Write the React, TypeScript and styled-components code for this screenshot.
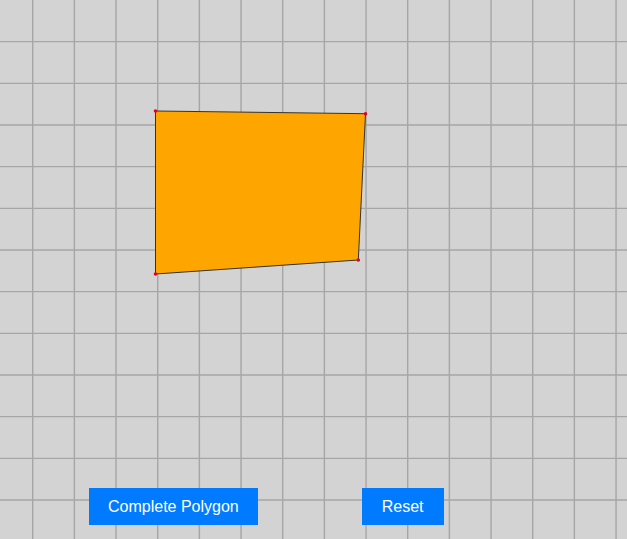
import React from "react";
import styled, { createGlobalStyle } from "styled-components";

const GlobalStyle = createGlobalStyle`
  html, body {
    margin: 0;
    padding: 0;
    background: #d3d3d3;
  }
  body {
    font-family: "Liberation Sans", Arial, sans-serif;
  }
`;

const Stage = styled.div`
  position: relative;
  width: 627px;
  height: 539px;
  overflow: hidden;
  background: #d3d3d3;
`;

const Canvas = styled.svg`
  position: absolute;
  inset: 0;
  display: block;
`;

const Toolbar = styled.div`
  position: relative;
  z-index: 1;
  display: flex;
  align-items: flex-start;
  gap: 104px;
  padding: 488px 0 0 89px;
`;

const Button = styled.button<{ $padX?: number }>`
  height: 37px;
  padding: 0 ${(p) => p.$padX ?? 19}px;
  border: none;
  border-radius: 0;
  background: #007bff;
  color: #ffffff;
  font-family: "Liberation Sans", Arial, sans-serif;
  font-size: 16px;
  line-height: 37px;
  cursor: pointer;
`;

const STEP = 41.667;
const X0 = 32.7;

const points: [number, number][] = [
  [155.5, 111],
  [365.5, 113.7],
  [358.3, 260],
  [155.5, 274],
];

export default function App() {
  const vLines: number[] = [];
  for (let x = X0; x < 627; x += STEP) vLines.push(x);
  const hLines: number[] = [];
  for (let y = STEP; y < 539; y += STEP) hLines.push(y);

  return (
    <>
      <GlobalStyle />
      <Stage>
        <Canvas width={627} height={539} viewBox="0 0 627 539">
          {vLines.map((x) => (
            <line key={`v${x}`} x1={x} y1={0} x2={x} y2={539} stroke="#a6a6a6" strokeWidth={1.4} />
          ))}
          {hLines.map((y) => (
            <line key={`h${y}`} x1={0} y1={y} x2={627} y2={y} stroke="#a6a6a6" strokeWidth={1.4} />
          ))}
          <polygon
            points={points.map((p) => p.join(",")).join(" ")}
            fill="#ffa500"
            stroke="#333"
            strokeWidth={1}
          />
          {points.map(([x, y]) => (
            <circle key={`${x}-${y}`} cx={x} cy={y} r={1.8} fill="#e0002a" />
          ))}
        </Canvas>
        <Toolbar>
          <Button>Complete Polygon</Button>
          <Button $padX={20}>Reset</Button>
        </Toolbar>
      </Stage>
    </>
  );
}
